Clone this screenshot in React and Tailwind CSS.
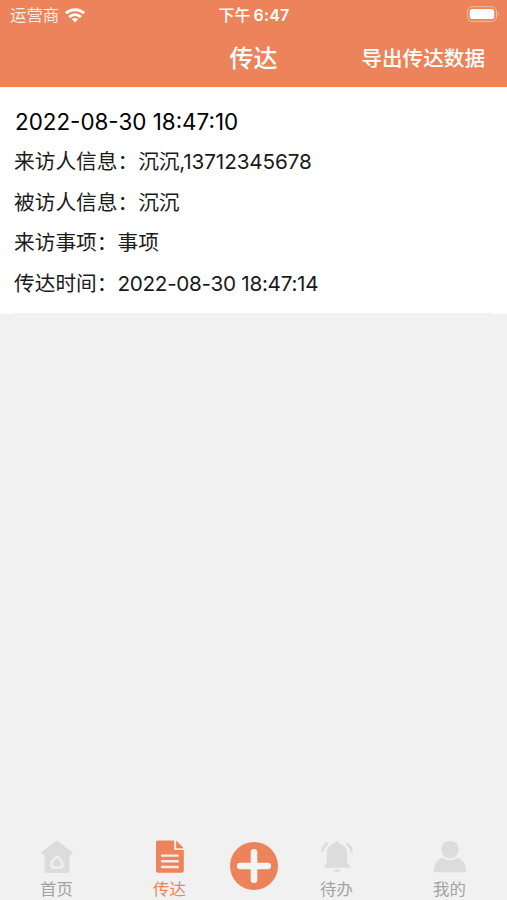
import React from "react";

const details = [
  { label: "来访人信息：", value: "沉沉,13712345678", spacing: "tracking-[-0.12px]" },
  { label: "被访人信息：", value: "沉沉" },
  { label: "来访事项：", value: "事项" },
  { label: "传达时间：", value: "2022-08-30 18:47:14", spacing: "tracking-[-0.3px]" },
];

function WifiIcon() {
  return (
    <svg className="ml-[6px] h-[15px] w-5" viewBox="0 0 20 15" fill="none" stroke="#fff" strokeWidth="3">
      <path d="M1 5.2C6 .5 14 .5 19 5.2" />
      <path d="M4.2 9.1C7.6 6 12.4 6 15.8 9.1" />
      <path d="M6.9 11.3C8.8 9.6 11.2 9.6 13.1 11.3L10 14.4Z" fill="#fff" stroke="none" />
    </svg>
  );
}

function BatteryIcon() {
  return (
    <svg className="mb-[2px] h-4 w-[34px]" viewBox="0 0 34 16">
      <rect x="1.5" y=".7" width="29" height="14.6" rx="4.5" fill="none" stroke="#fff" strokeOpacity=".45" />
      <rect x="3.7" y="3" width="24.6" height="10" rx="2.6" fill="#fff" />
      <path d="M31.8 6C33.3 6.6 33.3 9.4 31.8 10Z" fill="#fff" fillOpacity=".5" />
    </svg>
  );
}

function HomeIcon() {
  return (
    <svg className="h-9 w-9" viewBox="0 0 36 36">
      <path d="M17 2.2Q18 1.2 19 2.2L34 13.6 32.8 15.8 30.5 15.4V31.5Q30.5 34 28 34H8Q5.5 34 5.5 31.5V15.4L3.2 15.8 2 13.6Z" fill="#dcdcdc" />
      <path d="M18 17.6Q23.6 21.5 23.6 25.5Q23.6 28.6 20.8 28.6H15.2Q12.4 28.6 12.4 25.5Q12.4 21.5 18 17.6Z" fill="#dcdcdc" stroke="#f1f1f1" strokeWidth="2.3" strokeLinejoin="round" />
    </svg>
  );
}

function DocumentIcon() {
  return (
    <svg className="h-9 w-9" viewBox="0 0 36 36">
      <path d="M6 1.6H22.2V11H31.8V31.8Q31.8 33.8 29.8 33.8H6Q4 33.8 4 31.8V3.6Q4 1.6 6 1.6Z" fill="#ec835b" />
      <path d="M24.2 1.6 31.8 9.2H24.2Z" fill="#ec835b" />
      <path d="M10 16.6H25.8M10 22.3H25.8M10 28H25.8" stroke="#f8ece7" strokeWidth="2.4" strokeLinecap="round" />
    </svg>
  );
}

function BellIcon() {
  return (
    <svg className="h-9 w-9" viewBox="0 0 36 36" fill="#dcdcdc">
      <path d="M18 2Q19.6 2 19.8 4.2C25.5 5.5 28.3 9.6 28.3 15V24.5L31 27.2V28.8H5V27.2L7.7 24.5V15C7.7 9.6 10.5 5.5 16.2 4.2Q16.4 2 18 2Z" />
      <path d="M14.5 30.8H21.5Q20.8 33.5 18 33.5T14.5 30.8Z" />
      <path d="M8.5 4Q3.7 7.8 3.1 13.2M27.5 4Q32.3 7.8 32.9 13.2" fill="none" stroke="#dcdcdc" strokeWidth="2.5" />
    </svg>
  );
}

function UserIcon() {
  return (
    <svg className="h-9 w-9" viewBox="0 0 36 36" fill="#dcdcdc">
      <circle cx="18" cy="10.5" r="8.8" />
      <path d="M10.5 18.7Q18 23.8 25.5 18.7C31 20.3 34 26 34 31.5V33.3H2V31.5C2 26 5 20.3 10.5 18.7Z" />
    </svg>
  );
}

function Tab({ icon, label, active = false }) {
  return (
    <div className="flex flex-col items-center">
      {icon}
      <span className={`mt-[2px] text-[16.4px] leading-6 ${active ? "text-[#ec835b]" : "text-[#a3a3a3]"}`}>{label}</span>
    </div>
  );
}

export default function App() {
  return (
    <div className="flex h-[900px] w-[507px] flex-col overflow-hidden bg-[#f1f1f1] font-['Inter','Noto_Sans_CJK_SC',sans-serif] text-[#1a1a1a]">
      <header className="h-[87px] bg-[#ec835b] text-white">
        <div className="grid h-[30px] grid-cols-3 items-center pr-[7px] pl-[10px]">
          <div className="flex items-center text-[16.4px] leading-none">
            <span className="opacity-85">运营商</span>
            <WifiIcon />
          </div>
          <div className="flex justify-center gap-[3px] pr-[2px] text-[16px] leading-none font-medium">
            <span>下午</span>
            <span className="font-semibold tracking-[0.2px]">6:47</span>
          </div>
          <div className="flex justify-end">
            <BatteryIcon />
          </div>
        </div>
        <div className="grid h-[57px] grid-cols-[1fr_auto_1fr] items-center">
          <span />
          <h1 className="text-[24px] leading-none font-medium">传达</h1>
          <button className="justify-self-end pt-[2px] pr-[22px] text-[20.6px] leading-none font-medium">导出传达数据</button>
        </div>
      </header>

      <article className="h-[227px] bg-white px-[14px] pt-[14px]">
        <h2 className="h-[41px] pl-px text-[22.4px] leading-[41px] text-black">2022-08-30 18:47:10</h2>
        {details.map(({ label, value, spacing = "" }) => (
          <p key={label} className="flex h-[40.5px] text-[20.7px] leading-[40.5px] whitespace-nowrap">
            <span>{label}</span>
            <span className={spacing}>{value}</span>
          </p>
        ))}
        <div className="mt-[9px] h-[2px] bg-[#f1f1f1]" />
      </article>

      <main className="flex-1" />

      <nav className="grid h-[61px] grid-cols-[113px_113px_55px_111px_115px] items-start">
        <Tab icon={<HomeIcon />} label="首页" />
        <Tab icon={<DocumentIcon />} label="传达" active />
        <button className="flex justify-center pt-[2px]">
          <svg className="h-[50px] w-[50px]" viewBox="0 0 50 50">
            <circle cx="25" cy="25" r="24" fill="#ec835b" />
            <path d="M25 11.2V38.8M11.2 25H38.8" stroke="#f8f4f2" strokeWidth="6.6" strokeLinecap="round" />
          </svg>
        </button>
        <Tab icon={<BellIcon />} label="待办" />
        <Tab icon={<UserIcon />} label="我的" />
      </nav>
    </div>
  );
}
